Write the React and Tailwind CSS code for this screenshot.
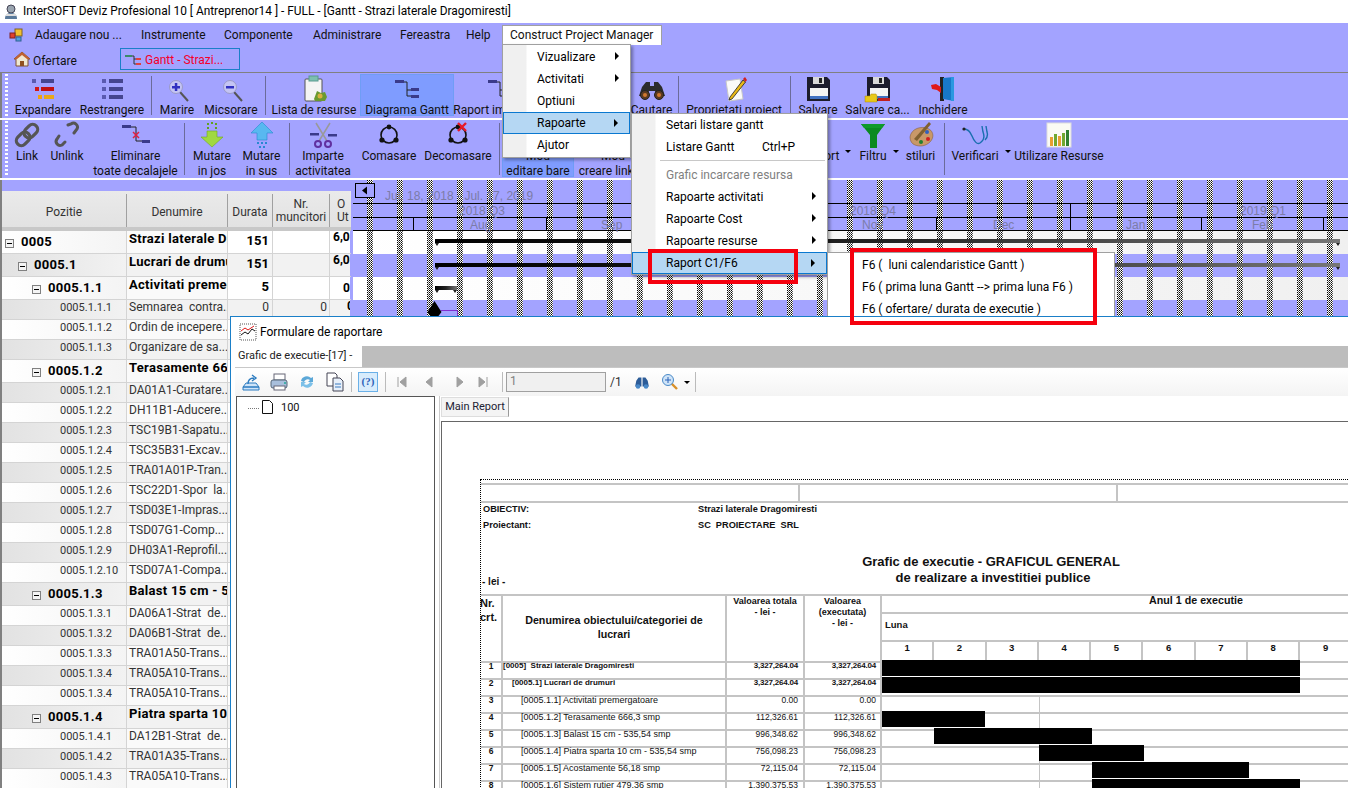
import React from "react";

const PURPLE = "bg-[#a3a3ff]";

function Ico({ s = 28, vb = 28, children, className = "" }) {
  return (
    <svg width={s} height={s} viewBox={`0 0 ${vb} ${vb}`} className={"shrink-0 " + className}>
      {children}
    </svg>
  );
}

const Bars = ({ rows }) => (
  <Ico>
    {rows.map((r, i) => (
      <g key={i}>
        <rect x={r[0]} y={r[1]} width="4" height="4" fill={r[2]} />
        <rect x={r[3]} y={r[1]} width={r[4]} height="4" fill={r[5]} />
      </g>
    ))}
  </Ico>
);
const IcoExpand = () => (
  <Bars rows={[[3, 4, "#5a5ab0", 12, 13, "#45458f"], [6, 12, "#d01818", 12, 13, "#c01010"], [9, 20, "#f0a010", 15, 10, "#e8a818"]]} />
);
const IcoCollapse = () => (
  <Bars rows={[[4, 4, "#5a5ab0", 11, 14, "#45458f"], [4, 12, "#5a5ab0", 11, 14, "#45458f"], [4, 20, "#5a5ab0", 11, 14, "#45458f"]]} />
);
const IcoZoom = ({ plus }) => (
  <Ico>
    <path d="M17 17l8 9" stroke="#555" strokeWidth="2" />
    <circle cx="13" cy="12" r="6.5" fill="#c4c4f4" stroke="#9a9ac8" />
    <rect x="9" y="11" width="8" height="2.5" fill="#3030c0" />
    {plus && <rect x="11.8" y="8" width="2.5" height="8" fill="#3030c0" />}
  </Ico>
);
const IcoClip = () => (
  <Ico>
    <rect x="5" y="4" width="17" height="22" rx="1" fill="#f4f4f4" stroke="#555" />
    <rect x="9" y="1" width="9" height="5" fill="#7cc0b0" stroke="#5a9a90" />
    <path d="M14 24l3-8 4 2 4-1 2 5-2 4h-10z" fill="#6a9a30" />
    <circle cx="20" cy="21" r="2.5" fill="#d8b040" />
  </Ico>
);
const IcoGantt = () => (
  <Ico>
    <rect x="2" y="5" width="9" height="3" fill="#3a3a8a" />
    <path d="M11 7h3v14M14 15h5M14 21h5" stroke="#222" fill="none" />
    <rect x="18" y="13" width="8" height="3" fill="#3a3a8a" />
    <rect x="18" y="20" width="8" height="3" fill="#3a3a8a" />
  </Ico>
);
const IcoBinoc = ({ s = 28 }) => (
  <Ico s={s}>
    <path d="M4 12l4-5h4v4h4V7h4l4 5 3 9H18l-1-5h-6l-1 5H1z" fill="#2c2c2c" />
    <circle cx="7" cy="20" r="4.5" fill="#5a3a22" stroke="#222" />
    <circle cx="21" cy="20" r="4.5" fill="#5a3a22" stroke="#222" />
    <circle cx="7" cy="20" r="2" fill="#d07830" />
    <circle cx="21" cy="20" r="2" fill="#d07830" />
  </Ico>
);
const IcoEdit = () => (
  <Ico>
    <path d="M6 6l14-2 3 20-14 2z" fill="#fafafa" stroke="#c8c8c8" />
    <path d="M10 22l13-17 2.5 2L12 24l-3 1z" fill="#e8b818" stroke="#222" strokeWidth=".8" />
    <path d="M23 4l2-2 2 3-1.5 2z" fill="#d02020" />
  </Ico>
);
const IcoFloppy = ({ folder }) => (
  <Ico>
    <path d="M3 2h20l3 3v21H3z" fill="#1c1c2c" />
    <rect x="9" y="2" width="11" height="7" fill="#d8d8d8" />
    <rect x="15" y="3" width="3" height="5" fill="#222" />
    <rect x="6" y="13" width="18" height="10" fill="#f4f4f4" />
    <rect x="6" y="21" width="18" height="3" fill="#4070c0" />
    {folder && (
      <g>
        <path d="M1 21h5l1-2h5l1 2v6H1z" fill="#e8c818" stroke="#a88810" strokeWidth=".5" />
        <rect x="14" y="23" width="12" height="3" fill="#c02020" />
      </g>
    )}
  </Ico>
);
const IcoDoor = () => (
  <Ico>
    <rect x="11" y="2" width="4" height="24" fill="#222" />
    <path d="M14 3l11-1v24l-11-2z" fill="#1878c8" />
    <rect x="22" y="2" width="3" height="24" fill="#2a98e0" />
    <path d="M2 10l5-1 5 3v6l-4-3-5-1z" fill="#e01818" />
  </Ico>
);
const IcoLink = () => (
  <Ico>
    <g fill="none" stroke="#555" strokeWidth="3.2" transform="rotate(-45 14 14)">
      <rect x="1" y="9" width="15" height="10" rx="5" />
      <rect x="12" y="9" width="15" height="10" rx="5" />
    </g>
  </Ico>
);
const IcoUnlink = () => (
  <Ico>
    <g fill="none" stroke="#555" strokeWidth="3" strokeLinecap="round">
      <path d="M6 15l-2 3a4 4 0 005 6l3-3" />
      <path d="M15 4l3-1a4 4 0 016 5l-3 4" />
    </g>
  </Ico>
);
const IcoNoLag = () => (
  <Ico>
    <rect x="0" y="4" width="9" height="3" fill="#3a3a8a" />
    <path d="M9 6h5v14h6" stroke="#222" fill="none" />
    <path d="M11 11l6 6M17 11l-6 6" stroke="#e02040" strokeWidth="1.5" />
    <rect x="20" y="19" width="8" height="3" fill="#3a3a8a" />
  </Ico>
);
const IcoDown = () => (
  <Ico>
    <path d="M9 2h2v2H9zM13 1h2v2h-2zM17 2h2v2h-2zM9 6h2v2H9zM17 6h2v2h-2z" fill="#60a020" />
    <path d="M9 10h10v6h6L14 26 3 16h6z" fill="#a0d840" stroke="#70a820" strokeWidth=".6" />
  </Ico>
);
const IcoUp = () => (
  <Ico>
    <path d="M14 1l11 11h-6v7H9v-7H3z" fill="#58b8f0" stroke="#2888d0" strokeWidth=".6" />
    <path d="M9 21h2v2H9zM13 21h2v2h-2zM17 21h2v2h-2zM11 25h2v2h-2zM15 25h2v2h-2z" fill="#2888d0" />
  </Ico>
);
const IcoCut = () => (
  <Ico>
    <rect x="1" y="12" width="9" height="2.5" fill="#3a3a8a" />
    <rect x="19" y="13" width="9" height="2.5" fill="#3a3a8a" />
    <path d="M7 2l11 18M21 2L10 20" stroke="#999" strokeWidth="1.5" />
    <circle cx="9" cy="23" r="3" fill="none" stroke="#6030a0" strokeWidth="2" />
    <circle cx="19" cy="23" r="3" fill="none" stroke="#6030a0" strokeWidth="2" />
  </Ico>
);
const IcoRing = ({ x }) => (
  <Ico>
    <circle cx="14" cy="14" r="8" fill="none" stroke="#111" strokeWidth="1.6" />
    <circle cx="14" cy="6" r="2.4" fill="#111" />
    <circle cx="7" cy="19" r="2.6" fill="#111" />
    <circle cx="21" cy="19" r="2.6" fill="#111" />
    {x && <path d="M14 2l8 8M22 2l-8 8" stroke="#e81828" strokeWidth="2.4" />}
  </Ico>
);
const IcoMode = () => (
  <Ico>
    <rect x="5" y="10" width="18" height="5" fill="#3a3a8a" />
  </Ico>
);
const IcoFunnel = () => (
  <Ico>
    <path d="M2 3h24l-8 11v13h-7V14z" fill="#0a8a20" />
    <path d="M2 3h24l-3 4H5z" fill="#0f9a2a" />
  </Ico>
);
const IcoPalette = () => (
  <Ico>
    <path d="M3 16C4 8 14 4 22 8c5 3 5 9 1 13-4 4-10 5-15 3-3-1-5-4-5-8z" fill="#c89868" stroke="#886040" strokeWidth=".6" />
    <circle cx="20" cy="11" r="2" fill="#3060c0" />
    <circle cx="21" cy="18" r="2" fill="#d02020" />
    <circle cx="14" cy="21" r="2" fill="#208030" />
    <path d="M7 18L22 1l2 2L10 20z" fill="#806030" />
  </Ico>
);
const IcoSteth = () => (
  <Ico>
    <path d="M3 8c4 0 6 2 8 7s5 9 8 7 5-6 3-11l-1-6M25 5l1 6c1 3 0 6-2 8" fill="none" stroke="#1a6fb0" strokeWidth="1.4" />
    <circle cx="3" cy="8" r="1.6" fill="#222" />
  </Ico>
);
const IcoChart = () => (
  <Ico>
    <rect x="2" y="2" width="24" height="24" fill="#fafaf4" stroke="#ddd" />
    <rect x="5" y="16" width="3" height="9" fill="#e8a030" />
    <rect x="9" y="13" width="3" height="12" fill="#70a830" />
    <rect x="13" y="15" width="3" height="10" fill="#e8a030" />
    <rect x="17" y="12" width="3" height="13" fill="#70a830" />
    <rect x="21" y="9" width="3" height="16" fill="#308030" />
  </Ico>
);
const IcoBlank = () => <Ico />;

function Sep() {
  return <div className="w-[3px] ml-[3px] border-l border-[#6b6b9a] my-[3px] shrink-0" />;
}

function Btn({ w, icon, lines, sel, caret, top }) {
  return (
    <div
      className={
        "flex flex-col items-center shrink-0 whitespace-nowrap " +
        w +
        (sel ? " bg-[#7f9cff] border border-[#6f9df5] " : " ") +
        (top || "pt-[2px]")
      }
    >
      {icon}
      {lines.map((l, i) => (
        <span key={i} className="relative leading-[15px]">
          {l}
          {caret && i === 0 && (
            <span className="absolute left-full top-[1px] ml-[6px] border-x-[3px] border-t-[3px] border-x-transparent border-t-black" />
          )}
        </span>
      ))}
    </div>
  );
}

function Grip() {
  return <div className="w-[3px] ml-[3px] mr-[2px] shrink-0 my-[1px] bg-[repeating-linear-gradient(to_bottom,#fff_0,#fff_2px,transparent_2px,transparent_4px)]" />;
}

function MenuItem({ label, arrow, sel, disabled, shortcut, gutter, pad }) {
  return (
    <div
      className={
        "flex items-center h-[22px] relative " +
        (sel ? "bg-[#b5d7f3] border border-[#0a78d0] " : "") +
        (disabled ? "text-[#808080] " : "text-black ")
      }
    >
      <span className={gutter + " shrink-0 h-full"} />
      <span className={pad + " whitespace-pre"}>{label}</span>
      {shortcut && <span className="absolute left-[130px]">{shortcut}</span>}
      {arrow && <span className="absolute right-[11px] top-[6px] border-y-[4px] border-l-[4px] border-y-transparent border-l-black" />}
    </div>
  );
}

const rows = [
  [0, "0005", "Strazi laterale Dragomiresti", "151", "", "6,000"],
  [1, "0005.1", "Lucrari de drumuri", "151", "", "6,000"],
  [2, "0005.1.1", "Activitati premergatoare", "5", "", "0"],
  [3, "0005.1.1.1", "Semnarea  contra...", "0", "0", "0"],
  [3, "0005.1.1.2", "Ordin de incepere...", "", "", ""],
  [3, "0005.1.1.3", "Organizare de sa...", "", "", ""],
  [2, "0005.1.2", "Terasamente 666,3 smp", "", "", ""],
  [3, "0005.1.2.1", "DA01A1-Curatare...", "", "", ""],
  [3, "0005.1.2.2", "DH11B1-Aducere...", "", "", ""],
  [3, "0005.1.2.3", "TSC19B1-Sapatu...", "", "", ""],
  [3, "0005.1.2.4", "TSC35B31-Excav...", "", "", ""],
  [3, "0005.1.2.5", "TRA01A01P-Tran...", "", "", ""],
  [3, "0005.1.2.6", "TSC22D1-Spor  la...", "", "", ""],
  [3, "0005.1.2.7", "TSD03E1-Impras...", "", "", ""],
  [3, "0005.1.2.8", "TSD07G1-Comp...", "", "", ""],
  [3, "0005.1.2.9", "DH03A1-Reprofil...", "", "", ""],
  [3, "0005.1.2.10", "TSD07A1-Compa...", "", "", ""],
  [2, "0005.1.3", "Balast 15 cm - 535,54 smp", "", "", ""],
  [3, "0005.1.3.1", "DA06A1-Strat  de...", "", "", ""],
  [3, "0005.1.3.2", "DA06B1-Strat  de...", "", "", ""],
  [3, "0005.1.3.3", "TRA01A50-Trans...", "", "", ""],
  [3, "0005.1.3.4", "TRA05A10-Trans...", "", "", ""],
  [3, "0005.1.3.4", "TRA05A10-Trans...", "", "", ""],
  [2, "0005.1.4", "Piatra sparta 10 cm", "", "", ""],
  [3, "0005.1.4.1", "DA12B1-Strat  de...", "", "", ""],
  [3, "0005.1.4.2", "TRA01A35-Trans...", "", "", ""],
  [3, "0005.1.4.3", "TRA05A10-Trans...", "", "", ""],
];

const boxPad = ["pl-[3px]", "pl-[16px]", "pl-[30px]"];

function GridRow({ r, i }) {
  const [lvl, pos, name, dur, mun, other] = r;
  const bold = lvl < 3;
  const even = i % 2 === 0;
  return (
    <div className={"flex border-b border-[#d4d4d4] " + (bold ? "h-[23px]" : "h-[20px]")}>
      <div
        className={
          "w-[125px] shrink-0 flex border-r border-[#d4d4d4] " +
          (bold ? boxPad[lvl] + " items-center pb-[1px] " : "pl-[58px] items-start ") +
          (even ? "bg-[linear-gradient(to_right,#fff,#f4f4f4)]" : "bg-[linear-gradient(to_right,#e2e2e2,#f2f2f2)]")
        }
      >
        {bold && (
          <span className="w-[9px] h-[9px] border border-[#808080] bg-[#f4f4f4] flex items-center justify-center mr-[7px] mt-[3px] shrink-0">
            <span className="w-[5px] h-px bg-black" />
          </span>
        )}
        <span className={bold ? "font-bold text-[13px] text-black tracking-[0.3px]" : "text-[11px] leading-[16px] text-[#333]"}>{pos}</span>
      </div>
      <div className={"w-[101px] shrink-0 overflow-hidden whitespace-pre pl-[2px] border-r border-[#d4d4d4] " + (even ? "bg-[#fafafa]" : "bg-[#f2f2f2]")}>
        <span className={bold ? "font-bold text-[13px] leading-[16px] block text-black tracking-[0.3px]" : "text-[12px] leading-[15px] block text-[#333]"}>{name}</span>
      </div>
      <div className={"w-[45px] shrink-0 text-right pr-[3px] border-r border-[#d4d4d4] " + (bold ? "font-bold text-[13px] leading-[18px] pt-[1px] text-black " : "text-[12px] leading-[15px] text-[#333] ") + (even ? "bg-white" : "bg-[#f2f2f2]")}>
        {dur}
      </div>
      <div className={"w-[57px] shrink-0 text-right pr-[2px] text-[12px] leading-[15px] text-[#333] border-r border-[#d4d4d4] " + (even ? "bg-white" : "bg-[#f2f2f2]")}>{mun}</div>
      <div className={"w-[20px] shrink-0 overflow-hidden whitespace-nowrap text-[12px] leading-[13px] font-bold text-black " + (lvl === 2 ? "pl-[13px] pt-[5px]" : lvl === 3 ? "pl-[17px]" : "pl-[3px]") + (even ? " bg-white" : " bg-[#f2f2f2]")}>
        {other}
      </div>
    </div>
  );
}

function Gantt() {
  const dots = Array.from({ length: 33 }, (_, k) => 367 + 30 * k);
  const grey = { fill: "#7c7ca8", fontSize: 12, fontFamily: "Liberation Sans, sans-serif" };
  return (
    <svg width="997" height="140" viewBox="351 180 997 140" className="block">
      <defs>
        <pattern id="dots" x="367" y="180" width="2" height="2" patternUnits="userSpaceOnUse">
          <rect width="2" height="2" fill="#fff" />
          <rect width="1" height="1" fill="#000" />
          <rect x="1" y="1" width="1" height="1" fill="#555" />
        </pattern>
        <linearGradient id="white" x1="0" x2="1" y1="0" y2="0">
          <stop offset="0" stopColor="#fff" />
          <stop offset="1" stopColor="#f0f0f0" />
        </linearGradient>
        <linearGradient id="bar" x1="0" x2="1" y1="0" y2="0">
          <stop offset="0" stopColor="#000" />
          <stop offset="0.5" stopColor="#222" />
          <stop offset="1" stopColor="#777" />
        </linearGradient>
      </defs>
      <rect x="351" y="180" width="997" height="140" fill="#a3a3ff" />
      <rect x="353" y="231" width="995" height="23" fill="url(#white)" />
      <rect x="353" y="277" width="995" height="23" fill="url(#white)" />
      {dots.map((x) => (
        <rect key={x} x={x} y="180" width="6" height="140" fill="url(#dots)" shapeRendering="crispEdges" />
      ))}
      <g stroke="#000" shapeRendering="crispEdges">
        <path d="M353 203.5H1348M353 217.5H1348M353 230.5H1348" />
        <path d="M413.5 217V230M546.5 217V230M936.5 217V230M1201.5 217V230M1323.5 217V230M1070.5 203V230" />
      </g>
      <rect x="355.5" y="183.5" width="19" height="14" fill="#a3a3ff" stroke="#000" />
      <path d="M362 190.5l5-4v8z" fill="#000" />
      <text x="385" y="200" {...grey}>Jul. 18, 2018 - Jul. 17, 2019</text>
      <text x="459" y="215" {...grey}>2018 Q3</text>
      <text x="850" y="215" {...grey}>2018 Q4</text>
      <text x="1240" y="215" {...grey}>2019 Q1</text>
      <text x="470" y="229" {...grey}>Aug</text>
      <text x="601" y="229" {...grey}>Sep</text>
      <text x="862" y="229" {...grey}>Nov</text>
      <text x="993" y="229" {...grey}>Dec</text>
      <text x="1126" y="229" {...grey}>Jan</text>
      <text x="1252" y="229" {...grey}>Feb</text>
      <rect x="435" y="239" width="905" height="4" fill="url(#bar)" />
      <rect x="435" y="263" width="905" height="4" fill="url(#bar)" />
      <path d="M435 243h4l-2 3zM1336 243h4l-2 3zM435 267h4l-2 3zM1336 267h4l-2 3zM435 290h4l-2 3zM453 290h4l-2 3z" fill="#222" />
      <rect x="435" y="286" width="22" height="4" fill="url(#bar)" />
      <path d="M434.5 301l7 11-3 4h-8l-3-4z" fill="#000" />
      <path d="M441 310.5h16.5V316" stroke="#8030d0" fill="none" />
    </svg>
  );
}

const report = [
  [1, "[0005]  Strazi laterale Dragomiresti", "3,327,264.04", 0, true, [[883, 157], [1040, 261]]],
  [2, "[0005.1] Lucrari de drumuri", "3,327,264.04", 1, true, [[883, 157], [1040, 261]]],
  [3, "[0005.1.1] Activitati premergatoare", "0.00", 2, false, []],
  [4, "[0005.1.2] Terasamente 666,3 smp", "112,326.61", 2, false, [[883, 103]]],
  [5, "[0005.1.3] Balast 15 cm - 535,54 smp", "996,348.62", 2, false, [[935, 105], [1040, 53]]],
  [6, "[0005.1.4] Piatra sparta 10 cm - 535,54 smp", "756,098.23", 2, false, [[1040, 105]]],
  [7, "[0005.1.5] Acostamente 56,18 smp", "72,115.04", 2, false, [[1093, 157]]],
  [8, "[0005.1.6] Sistem rutier 479,36 smp", "1,390,375.53", 2, false, [[1093, 208]]],
];
const indent = ["pl-0", "pl-[9px]", "pl-[18px]"];
const months = [1, 2, 3, 4, 5, 6, 7, 8, 9, 10, 11, 12];
const ticks = [52, 104, 418];

function Report() {
  return (
    <div className="w-[1000px] border-l border-t border-dotted border-black pt-[3px] font-['Liberation_Sans',sans-serif] text-[#111] shrink-0">
      <div className="flex h-[20px] border-y-2 border-[#c4c4c4]">
        <div className="w-[319px] border-r-2 border-[#c4c4c4]" />
        <div className="w-[318px] border-r-2 border-[#c4c4c4]" />
      </div>
      <div className="flex h-[14px] items-center text-[9.2px] font-bold pl-[2px] whitespace-pre">
        <span className="w-[215px]">OBIECTIV:</span>
        <span>Strazi laterale Dragomiresti</span>
      </div>
      <div className="flex h-[18px] items-center text-[9.2px] font-bold pl-[2px] whitespace-pre">
        <span className="w-[215px]">Proiectant:</span>
        <span>SC  PROIECTARE  SRL</span>
      </div>
      <div className="relative h-[59px] pt-[19px] pl-[381px]">
        <div className="w-[258px] text-center font-bold text-[13px] leading-[16px] whitespace-nowrap">
          Grafic de executie - GRAFICUL GENERAL
          <br />
          <span className="ml-[4px]">de realizare a investitiei publice</span>
        </div>
        <span className="absolute left-[1px] bottom-[6px] text-[10px] leading-[12px] font-bold">- lei -</span>
      </div>
      <div className="flex h-[67px] border-t-2 border-[#c4c4c4] font-bold">
        <div className="w-[23px] shrink-0 border-r-2 border-[#c4c4c4] text-[11px] leading-[14px] -ml-px">
          Nr.
          <br />
          crt.
        </div>
        <div className="w-[224px] shrink-0 border-r-2 border-[#c4c4c4] text-[10.7px] leading-[14px] text-center pt-[17px] px-[10px]">
          Denumirea obiectului/categoriei de lucrari
        </div>
        <div className="w-[78px] shrink-0 border-r-2 border-[#c4c4c4] text-[9px] leading-[11px] text-center">
          Valoarea totala
          <br />- lei -
        </div>
        <div className="w-[77px] shrink-0 border-r-2 border-[#c4c4c4] text-[9px] leading-[11px] text-center">
          Valoarea
          <br />
          (executata)
          <br />- lei -
        </div>
        <div className="flex flex-col w-[628px] shrink-0">
          <div className="h-[18px] text-center text-[10.7px] leading-[8px] border-b-2 border-[#c4c4c4]">Anul 1 de executie</div>
          <div className="h-[28px] border-b-2 border-[#c4c4c4] text-[9.5px] pl-[3px] pt-[4px]">Luna</div>
          <div className="flex h-[19px]">
            {months.map((m) => (
              <div key={m} className="w-[52.3px] shrink-0 border-r-2 border-[#c4c4c4] text-center text-[9.5px] leading-[11px]">
                {m}
              </div>
            ))}
          </div>
        </div>
      </div>
      {report.map(([n, name, val, lvl, bold, bars]) => (
        <div key={n} className="flex h-[17px] border-t-2 border-[#c4c4c4] text-[8.5px] leading-[6px]">
          <div className="w-[22px] shrink-0 border-r-2 border-[#c4c4c4] text-center font-bold">{n}</div>
          <div className={"w-[224px] shrink-0 whitespace-pre border-r-2 border-[#c4c4c4] " + indent[lvl] + (bold ? " font-bold text-[8px]" : " text-[9px]")}>{name}</div>
          <div className={"w-[78px] shrink-0 text-right pr-[5px] border-r-2 border-[#c4c4c4]" + (bold ? " font-bold tracking-[-0.2px] text-[8px]" : "")}>{val}</div>
          <div className={"w-[77px] shrink-0 text-right pr-[4px] border-r-2 border-[#c4c4c4]" + (bold ? " font-bold tracking-[-0.2px] text-[8px]" : "")}>{val}</div>
          <div className="relative w-[628px] -mt-[2px] shrink-0">
            {n > 2 && <div className="absolute left-[157px] top-0 w-[262px] h-[2px] bg-[#c4c4c4]" />}
            {n > 2 && <div className="absolute left-[157px] top-0 w-[1px] h-[17px] bg-[#c4c4c4]" />}
            {n > 2 && ticks.map((t) => <div key={t} className="absolute top-0 w-[2px] h-px bg-[#c4c4c4]" style={{ left: t }} />)}
            {bars.map(([x, w]) => (
              <div key={x} className="absolute top-[-1px] h-[16px] bg-black" style={{ left: x - 883, width: w }} />
            ))}
          </div>
        </div>
      ))}
    </div>
  );
}

function ReportBar() {
  return (
    <div className="flex items-center h-[29px] ml-[4px] border-t border-[#c8c8c8] bg-[linear-gradient(to_bottom,#fff,#f4f4f4)] pl-[6px] shrink-0">
      <svg width="20" height="20" viewBox="0 0 20 20" className="mr-[3px]">
        <path d="M2 15h16v3H2zM5 11h10l3 4H2z" fill="#cfe4f8" stroke="#2b7bc0" />
        <path d="M7 12c0-4 2-6 6-6M11 3l4 3-4 3" stroke="#2b7bc0" fill="none" strokeWidth="1.4" />
      </svg>
      <svg width="20" height="20" viewBox="0 0 20 20" className="ml-[5px]">
        <rect x="5" y="2" width="11" height="6" fill="#fff" stroke="#667" />
        <rect x="2" y="8" width="16" height="8" rx="2" fill="#a8bfdc" stroke="#567" />
        <rect x="5" y="14" width="11" height="4" fill="#fff" stroke="#667" />
        <circle cx="16" cy="11" r="1" fill="#2a9" />
      </svg>
      <svg width="18" height="18" viewBox="0 0 18 18" className="ml-[9px]">
        <path d="M3 8a6 6 0 0110-3l2-1v5h-5l2-2a4 4 0 00-6 2z" fill="#5ca8d8" />
        <path d="M15 10a6 6 0 01-10 3l-2 1V9h5l-2 2a4 4 0 006-2z" fill="#7cc0e8" />
      </svg>
      <svg width="20" height="20" viewBox="0 0 20 20" className="ml-[9px]">
        <path d="M2 1h8l2 2v11H2z" fill="#fff" stroke="#445" />
        <path d="M8 6h7l3 3v10H8z" fill="#e8f0fa" stroke="#445" />
        <path d="M10 12h6M10 15h6" stroke="#3a7ac0" />
      </svg>
      <div className="w-px h-[20px] bg-[#bbb] ml-[6px] mr-[6px]" />
      <div className="w-[20px] h-[20px] bg-[#d8ecfc] border border-[#6ab0e8] text-[#2b62b8] font-bold text-[11px] leading-[17px] text-center font-['Liberation_Serif',serif]">(?)</div>
      <div className="w-px h-[20px] bg-[#bbb] mx-[7px]" />
      <svg width="92" height="14" viewBox="0 0 92 14" className="ml-[3px]">
        <path d="M2 2v10M10 2L4 7l6 5zM36 2l-6 5 6 5zM61 2l6 5-6 5zM91 2v10M83 2l6 5-6 5z" fill="#a0a0a0" stroke="#a0a0a0" />
      </svg>
      <div className="w-px h-[20px] bg-[#bbb] ml-[14px] mr-[3px]" />
      <div className="w-[100px] h-[20px] border border-[#a0a0a0] bg-[#f0f0f0] text-[#808080] text-[12px] leading-[17px] pl-[3px]">1</div>
      <span className="ml-[4px] text-[12px] text-[#333]">/1</span>
      <span className="ml-[12px]">
        <svg width="16" height="16" viewBox="0 0 28 28">
          <path d="M4 12l4-6h5v16H2zM24 12l-4-6h-5v16h11z" fill="#2c5c98" />
          <circle cx="7" cy="22" r="4" fill="#4888c8" />
          <circle cx="21" cy="22" r="4" fill="#4888c8" />
        </svg>
      </span>
      <svg width="18" height="18" viewBox="0 0 18 18" className="ml-[11px]">
        <path d="M10 10l6 6" stroke="#d8902a" strokeWidth="2.4" />
        <circle cx="7" cy="7" r="5.5" fill="#cfe4f8" stroke="#4a8ac8" />
        <path d="M4 7h6M7 4v6" stroke="#2b62b8" />
      </svg>
      <span className="ml-[5px] border-x-[3px] border-t-[3px] border-x-transparent border-t-black" />
      <div className="w-px h-[20px] bg-[#bbb] ml-[5px]" />
    </div>
  );
}

function ReportWindow() {
  return (
    <div className="absolute left-[230px] top-[316px] w-[1118px] h-[472px] bg-white border-l border-t border-[#1a7fc8] overflow-hidden flex flex-col">
      <div className="flex items-center h-[29px] shrink-0 pl-[8px] text-[12px] text-black">
        <svg width="18" height="18" viewBox="0 0 18 18" className="mr-[3px]">
          <rect x="1" y="1" width="16" height="16" fill="#fff" stroke="#555" strokeDasharray="1 1" />
          <path d="M2 12l4-3 3 2 4-5 3 2" stroke="#111" fill="none" />
          <path d="M2 8l4-3 3 2 6-4" stroke="#e01818" fill="none" />
        </svg>
        Formulare de raportare
      </div>
      <div className="flex h-[21px] shrink-0 bg-[#bdbdbd]">
        <div className="w-[131px] bg-white text-[11px] leading-[20px] pl-[7px] text-[#222] whitespace-nowrap">Grafic de executie-[17] -</div>
      </div>
      <ReportBar />
      <div className="flex flex-1 min-h-0 ml-[5px]">
        <div className="w-[199px] shrink-0 border border-[#555] border-b-0 flex items-start pl-[11px] pt-[3px] text-[11px]">
          <span className="w-[11px] border-t border-dotted border-[#777] mt-[8px] mr-[3px]" />
          <svg width="11" height="14" viewBox="0 0 11 14" className="mr-[8px]">
            <path d="M.5.5h7l3 3v10H.5z" fill="#fff" stroke="#111" />
          </svg>
          100
        </div>
        <div className="flex flex-col flex-1 min-w-0 ml-[4px] border-l border-[#ccc]">
          <div className="h-[25px] shrink-0 flex items-start pl-[1px] pt-[1px]">
            <div className="border border-[#ddd] bg-[#f4f4f4] h-[20px] w-[68px] text-center text-[11px] leading-[18px] text-[#223] border-r-[#999]">Main Report</div>
          </div>
          <div className="flex-1 min-h-0 ml-[1px] border-l border-t border-[#666] pl-[38px] pt-[57px] overflow-hidden">
            <Report />
          </div>
        </div>
      </div>
    </div>
  );
}

function Menus() {
  return (
    <>
      <div className="absolute left-[502px] top-[25px] w-[160px] h-[20px] bg-white border border-[#a0a0a0] border-b-0 text-[12px] leading-[19px] pl-[7px]">
        Construct Project Manager
      </div>
      <div className="absolute left-[502px] top-[44px] w-[129px] h-[114px] bg-white border border-[#a0a0a0] shadow-[2px_2px_3px_rgba(0,0,0,0.35)] text-[12px] py-[1px] bg-[linear-gradient(to_right,#f0f0f0_23px,#fff_24px)]">
        <MenuItem label="Vizualizare" arrow gutter="w-[24px]" pad="pl-[10px]" />
        <MenuItem label="Activitati" arrow gutter="w-[24px]" pad="pl-[10px]" />
        <MenuItem label="Optiuni" gutter="w-[24px]" pad="pl-[10px]" />
        <MenuItem label="Rapoarte" arrow sel gutter="w-[23px]" pad="pl-[10px]" />
        <MenuItem label="Ajutor" gutter="w-[24px]" pad="pl-[10px]" />
      </div>
      <div className="absolute left-[631px] top-[113px] w-[197px] h-[162px] bg-white border border-[#a0a0a0] shadow-[2px_2px_3px_rgba(0,0,0,0.35)] text-[12px] bg-[linear-gradient(to_right,#f0f0f0_23px,#fff_24px)]">
        <MenuItem label="Setari listare gantt" gutter="w-[24px]" pad="pl-[10px]" />
        <MenuItem label="Listare Gantt" shortcut="Ctrl+P" gutter="w-[24px]" pad="pl-[10px]" />
        <div className="h-[3px] ml-[28px] mr-[2px] border-b border-[#c8c8c8] mb-[3px]" />
        <MenuItem label="Grafic incarcare resursa" disabled gutter="w-[24px]" pad="pl-[10px]" />
        <MenuItem label="Rapoarte activitati" arrow gutter="w-[24px]" pad="pl-[10px]" />
        <MenuItem label="Rapoarte Cost" arrow gutter="w-[24px]" pad="pl-[10px]" />
        <MenuItem label="Rapoarte resurse" arrow gutter="w-[24px]" pad="pl-[10px]" />
        <MenuItem label="Raport C1/F6" arrow sel gutter="w-[23px]" pad="pl-[10px]" />
      </div>
      <div className="absolute left-[827px] top-[252px] w-[288px] h-[64px] bg-white border border-[#a0a0a0] border-b-0 text-[12px] pt-[1px]">
        <MenuItem label="F6 (  luni calendaristice Gantt )" gutter="w-0" pad="pl-[34px]" />
        <MenuItem label="F6 ( prima luna Gantt --> prima luna F6 )" gutter="w-0" pad="pl-[34px]" />
        <MenuItem label="F6 ( ofertare/ durata de executie )" gutter="w-0" pad="pl-[34px]" />
      </div>
      <div className="absolute left-[648px] top-[249px] w-[150px] h-[35px] border-[4px] border-[#f5000e]" />
      <div className="absolute left-[850px] top-[248px] w-[247px] h-[77px] border-[4px] border-[#f5000e]" />
    </>
  );
}

export default function App() {
  return (
    <div className="relative w-[1348px] h-[788px] overflow-hidden bg-white font-['Roboto',sans-serif] text-[12px] text-[#111]">
      <div className="flex items-center h-[23px] pl-[3px] bg-white text-[11.9px] text-black">
        <svg width="16" height="16" viewBox="0 0 16 16" className="mr-[4px]">
          <circle cx="8" cy="5" r="4" fill="#9aa5b0" stroke="#445" />
          <path d="M2 15c0-5 3-6 6-6s6 1 6 6z" fill="#5a7a9a" />
          <rect x="3" y="10" width="10" height="2" fill="#ddd" />
        </svg>
        InterSOFT Deviz Profesional 10 [ Antreprenor14 ] - FULL - [Gantt - Strazi laterale Dragomiresti]
      </div>

      <div className={"flex items-center h-[23px] pl-[9px] " + PURPLE}>
        <svg width="14" height="14" viewBox="0 0 14 14" className="mr-[12px] shrink-0">
          <rect x="6" y="1" width="7" height="7" fill="#f0c030" stroke="#806020" />
          <rect x="1" y="5" width="5" height="5" fill="#e04030" stroke="#802020" />
          <rect x="7" y="9" width="5" height="4" fill="#50a0e0" stroke="#306090" />
        </svg>
        <span className="w-[106px]">Adaugare nou ...</span>
        <span className="w-[83px]">Instrumente</span>
        <span className="w-[89px]">Componente</span>
        <span className="w-[87px]">Administrare</span>
        <span className="w-[66px]">Fereastra</span>
        <span className="w-[36px]">Help</span>
      </div>

      <div className={"flex items-start h-[26px] pl-[14px] pt-[2px] " + PURPLE}>
        <svg width="16" height="16" viewBox="0 0 16 16" className="mr-[3px] mt-[3px] shrink-0">
          <path d="M8 1L0 8h2v7h12V8h2z" fill="#f0e8d0" stroke="#805030" />
          <path d="M8 1L0 8h3l5-4 5 4h3z" fill="#c06030" />
          <rect x="6" y="10" width="4" height="5" fill="#905020" />
        </svg>
        <span className="w-[87px] leading-[26px]">Ofertare</span>
        <div className="flex items-center w-[120px] h-[22px] border border-[#1a7fc8] pl-[4px] pt-px text-[#f5002a]">
          <svg width="18" height="14" viewBox="0 0 18 14" className="mr-[2px] shrink-0">
            <rect x="0" y="2" width="7" height="2" fill="#3a8a6a" />
            <path d="M7 3h2v8h2M9 6h2" stroke="#333" fill="none" />
            <rect x="11" y="5" width="5" height="2" fill="#e04040" />
            <rect x="11" y="10" width="5" height="2" fill="#e04040" />
          </svg>
          Gantt - Strazi...
        </div>
      </div>

      <div className={"flex h-[46px] border-t border-[#808080] border-l-2 border-l-[#808080] " + PURPLE}>
        <Grip />
        <Btn w="w-[66px]" icon={<IcoExpand />} lines={["Expandare"]} />
        <Btn w="w-[72px]" icon={<IcoCollapse />} lines={["Restrangere"]} />
        <Sep />
        <Btn w="w-[46px]" icon={<IcoZoom plus />} lines={["Marire"]} />
        <Btn w="w-[62px]" icon={<IcoZoom />} lines={["Micsorare"]} />
        <Sep />
        <Btn w="w-[92px]" icon={<IcoClip />} lines={["Lista de resurse"]} />
        <Btn w="w-[94px]" sel top="pt-0 mt-px mb-[2px]" icon={<IcoGantt />} lines={["Diagrama Gantt"]} />
        <Btn w="w-[92px]" icon={<IcoGantt />} lines={["Raport imprimare"]} />
        <div className="w-[82px] shrink-0" />
        <Btn w="w-[47px]" icon={<IcoBinoc />} lines={["Cautare"]} />
        <Sep />
        <Btn w="w-[106px]" icon={<IcoEdit />} lines={["Proprietati proiect"]} />
        <Sep />
        <Btn w="w-[50px]" icon={<IcoFloppy />} lines={["Salvare"]} />
        <Btn w="w-[69px]" icon={<IcoFloppy folder />} lines={["Salvare ca..."]} />
        <Btn w="w-[62px]" icon={<IcoDoor />} lines={["Inchidere"]} />
      </div>
      <div className="h-[2px] bg-white" />

      <div className={"flex h-[58px] border-l-2 border-l-[#808080] " + PURPLE}>
        <Grip />
        <Btn w="w-[34px]" top="pt-[1px]" icon={<IcoLink />} lines={["Link"]} />
        <Btn w="w-[46px]" top="pt-[1px]" icon={<IcoUnlink />} lines={["Unlink"]} />
        <Btn w="w-[91px]" top="pt-[1px]" icon={<IcoNoLag />} lines={["Eliminare", "toate decalajele"]} />
        <Sep />
        <Btn w="w-[50px]" top="pt-[1px]" icon={<IcoDown />} lines={["Mutare", "in jos"]} />
        <Btn w="w-[49px]" top="pt-[1px]" icon={<IcoUp />} lines={["Mutare", "in sus"]} />
        <Sep />
        <Btn w="w-[62px]" top="pt-[1px]" icon={<IcoCut />} lines={["Imparte", "activitatea"]} />
        <Btn w="w-[70px]" top="pt-[1px]" icon={<IcoRing />} lines={["Comasare"]} />
        <Btn w="w-[68px]" top="pt-[1px]" icon={<IcoRing x />} lines={["Decomasare"]} />
        <div className="w-[4px] shrink-0" />
        <Sep />
        <Btn w="w-[72px]" sel top="pt-0 mb-px" icon={<IcoMode />} lines={["Mod", "editare bare"]} />
        <Btn w="w-[78px]" top="pt-[1px]" icon={<IcoMode />} lines={["Mod", "creare linkuri"]} />
        <div className="w-[144px] shrink-0" />
        <Btn w="w-[52px]" top="pt-[1px]" icon={<IcoBlank />} lines={["Export"]} caret />
        <Btn w="w-[50px]" top="pt-[1px]" icon={<IcoFunnel />} lines={["Filtru"]} caret />
        <div className="w-[2px] shrink-0" />
        <Btn w="w-[41px]" top="pt-[1px]" icon={<IcoPalette />} lines={["stiluri"]} />
        <Sep />
        <Btn w="w-[56px]" top="pt-[1px]" icon={<IcoSteth />} lines={["Verificari"]} caret />
        <Btn w="w-[112px]" top="pt-[1px]" icon={<IcoChart />} lines={["Utilizare Resurse"]} />
      </div>
      <div className="h-[2px] bg-white" />

      <div className="flex">
        <div className={"w-[351px] shrink-0 pt-[11px] border-l-2 border-l-[#808080] " + PURPLE}>
          <div className="flex h-[40px] pt-[3px] bg-[linear-gradient(to_bottom,#eaeaea,#e2e2e2)] border-b-4 border-[#c8c8c8] text-[#333] text-center leading-[13px] overflow-hidden">
            <div className="w-[125px] shrink-0 h-[33px] pt-[4px] border-r border-[#a0a0a0] flex items-center justify-center">Pozitie</div>
            <div className="w-[101px] shrink-0 h-[33px] pt-[4px] border-r border-[#a0a0a0] flex items-center justify-center">Denumire</div>
            <div className="w-[45px] shrink-0 h-[33px] pt-[4px] border-r border-[#a0a0a0] flex items-center justify-center">Durata</div>
            <div className="w-[57px] shrink-0 h-[33px] pt-[4px] border-r border-[#a0a0a0]">
              Nr.
              <br />
              muncitori
            </div>
            <div className="w-[20px] shrink-0 h-[33px] pt-[4px] whitespace-nowrap text-left pl-[7px]">
              O
              <br />
              Ut
            </div>
          </div>
          {rows.map((r, i) => (
            <GridRow key={i} r={r} i={i} />
          ))}
        </div>
        <div className="flex-1 min-w-0 overflow-hidden">
          <Gantt />
        </div>
      </div>

      <ReportWindow />
      <Menus />
    </div>
  );
}
